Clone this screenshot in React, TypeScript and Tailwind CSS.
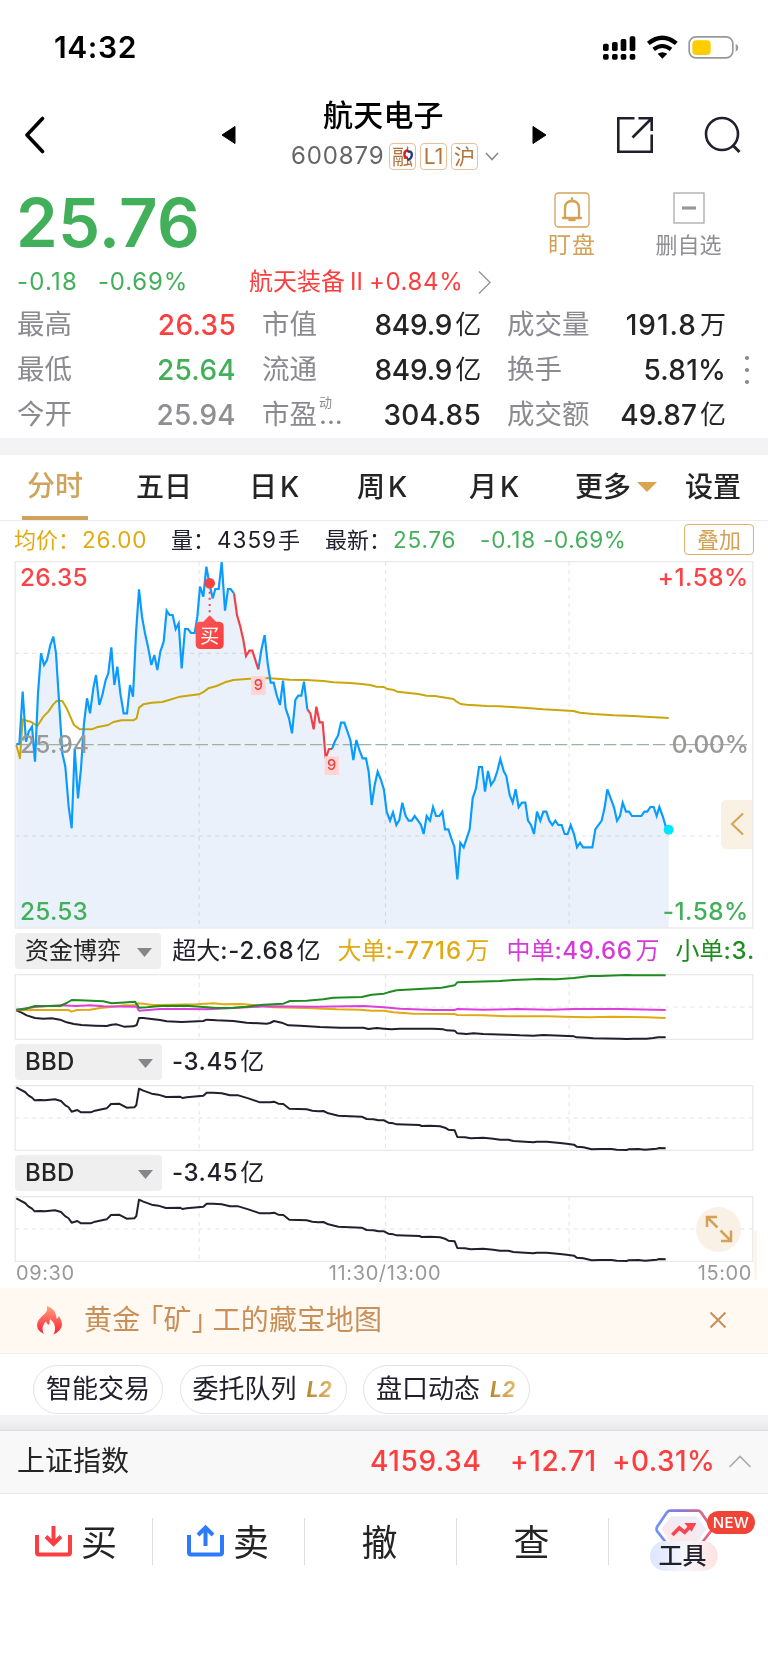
import type { ReactNode } from "react";

const PRICE_A =
  "49,912 58,912 68,755 78,905 86,875 96,860 105,965 114,760 123,640 132,675 141,660 151,615 160,590 168,640 173,720 180,830 187,940 196,980 206,1100 215,1165 224,925 234,1075 243,985 252,850 261,775 270,820 280,745 288,705 298,795 307,765 317,720 325,700 334,622 343,735 352,680 361,760 371,820 381,820 390,735 399,770 408,580 417,448 426,530 435,580 444,620 454,675 463,645 472,690 481,635 491,605 500,512 509,525 518,525 527,567 536,550 545,685 555,567 564,567 573,579 584,579 592,530 600,440 610,470 619,380 628,430 638,475 646,447 656,447 665,366 675,512 684,447 692,447 702,460";
const DROP_A = "702,460 711,525 721,560 730,600 738,648 748,632 757,632 775,688";
const PRICE_B =
  "775,688 784,630 794,585 803,670 812,728 821,728 830,765 840,795 849,722 857,805 867,835 876,880 886,780 895,767 904,767 912,725 922,808";
const DROP_B = "922,808 931,820 941,868 949,800 959,847 968,847 977,955 987,927 996,927";
const PRICE_C =
  "996,927 1005,903 1014,887 1023,848 1033,848 1051,900 1060,960 1069,900 1078,930 1088,955 1098,955 1106,995 1115,1095 1124,1035 1133,995 1143,1020 1152,1050 1160,1115 1170,1142 1179,1117 1189,1155 1198,1140 1207,1088 1217,1128 1226,1142 1235,1142 1244,1128 1254,1142 1263,1155 1271,1182 1280,1128 1290,1142 1299,1101 1308,1128 1318,1128 1327,1115 1335,1168 1345,1168 1354,1195 1363,1220 1372,1318 1381,1208 1391,1222 1400,1195 1409,1168 1418,1075 1428,1045 1437,981 1446,981 1455,1055 1464,993 1473,1035 1483,1020 1492,993 1501,957 1511,993 1519,1008 1529,1065 1538,1088 1547,1048 1556,1102 1566,1088 1576,1088 1584,1142 1593,1155 1602,1182 1611,1115 1621,1142 1630,1115 1639,1115 1648,1142 1657,1155 1666,1142 1675,1155 1685,1155 1694,1182 1703,1182 1712,1155 1722,1182 1731,1222 1740,1208 1749,1222 1777,1222 1786,1168 1805,1142 1814,1102 1822,1048 1832,1075 1842,1102 1851,1142 1860,1128 1868,1088 1878,1115 1887,1115 1896,1128 1924,1128 1933,1115 1942,1115 1951,1101 1961,1101 1970,1128 1978,1101 1988,1128 1998,1162 2006,1170";
const AVERAGE =
  "49,915 60,955 68,838 80,842 92,845 112,858 130,830 145,815 160,793 170,783 187,783 200,805 222,855 240,868 275,868 290,862 325,855 340,846 365,841 400,841 410,835 417,803 430,793 455,788 487,786 540,770 597,763 612,755 625,745 650,738 675,727 700,720 750,716 800,714 870,719 920,720 970,723 1000,727 1050,729 1085,732 1110,735 1130,740 1152,741 1162,747 1178,749 1192,755 1255,762 1280,767 1305,768 1360,777 1370,785 1382,792 1400,794 1460,798 1500,799 1580,804 1630,808 1720,813 1740,818 1780,822 1840,826 1900,828 1950,831 2006,834";
const BBD =
  "49,471 60,477 75,485 85,495 96,502 104,510 120,509 135,510 165,507 183,512 196,525 205,530 215,544 232,539 243,546 272,546 285,541 320,534 333,521 357,520 380,532 403,531 409,524 417,475 430,481 455,490 475,493 498,500 540,499 547,503 560,501 610,496 620,487 640,487 665,489 690,495 715,495 745,504 780,516 810,516 822,514 835,520 850,521 868,535 895,536 920,537 937,541 955,543 970,542 985,549 1015,556 1085,559 1100,566 1120,567 1135,570 1152,570 1165,577 1180,579 1190,582 1258,584 1265,587 1290,586 1320,588 1335,592 1345,598 1364,600 1372,620 1395,621 1412,624 1450,622 1480,625 1500,628 1525,628 1540,632 1575,634 1600,636 1610,634 1640,634 1680,638 1700,640 1722,643 1730,649 1750,651 1775,657 1800,656 1835,656 1850,658 1880,659 1885,657 1915,656 1935,658 1970,655 1978,653 1997,654";
const FLOW_SUPER =
  "49,240 65,247 80,255 105,263 130,265 155,264 180,268 200,276 222,281 245,284 285,286 320,287 335,283 350,282 372,289 400,288 410,284 417,263 430,263 480,269 500,273 545,275 610,272 620,268 650,270 700,272 740,277 800,280 810,278 822,272 845,277 865,285 900,286 960,290 1020,292 1090,292 1105,296 1130,293 1152,295 1175,297 1200,295 1300,295 1330,297 1340,300 1364,301 1372,309 1400,311 1420,309 1450,311 1520,313 1560,315 1600,316 1630,314 1722,318 1730,321 1760,322 1780,324 1860,325 1880,326 1900,325 1940,325 1960,323 1975,321 1997,321";
const FLOW_SMALL =
  "49,238 75,236 105,227 180,227 200,218 215,209 240,210 310,213 335,219 360,217 405,214 417,232 440,231 480,227 560,226 610,230 650,233 700,232 740,229 790,223 850,220 870,212 920,211 970,207 1000,202 1085,200 1115,193 1152,190 1165,186 1190,180 1325,172 1364,165 1372,156 1500,152 1540,149 1620,146 1670,147 1722,143 1770,137 1800,137 1880,134 1900,135 1997,135";
const FLOW_MID =
  "49,238 105,230 180,225 230,227 270,225 310,228 410,229 417,241 480,236 560,236 620,237 700,233 800,228 950,229 1090,227 1152,231 1200,235 1300,239 1364,239 1372,236 1450,238 1550,236 1650,238 1722,236 1860,236 1997,239";
const FLOW_BIG =
  "49,240 100,239 205,239 215,244 230,239 270,238 300,233 340,229 372,225 405,224 415,219 460,224 520,223 590,222 640,219 670,222 720,221 760,224 820,231 920,233 1010,237 1080,238 1115,241 1152,241 1180,246 1240,250 1364,251 1372,254 1450,255 1520,258 1640,258 1722,260 1770,261 1830,259 1940,261 1997,263";

function StatusBar() {
  return (
    <div className="flex h-[94px] shrink-0 items-center justify-between pr-[29px] pl-[54px]">
      <span className="text-[30px] font-semibold tracking-[0.6px] text-black">14:32</span>
      <svg width="136" height="26" viewBox="0 0 408 78" className="mt-[1px]">
        <g>
          {[
            [0, 22],
            [27, 17],
            [53, 8],
            [80, 0],
          ].map(([x, y]) => (
            <g key={x}>
              <rect x={x} y={y + 4} width="17" height={44 - y} rx="5" />
              <rect x={x} y="57" width="17" height="17" rx="5" />
            </g>
          ))}
        </g>
        <g fill="none" stroke="#000">
          <path d="M136 25 Q178 -9 220 25" strokeWidth="13" />
          <path d="M152 43 Q178 23 204 43" strokeWidth="12" />
        </g>
        <path d="M164 56 Q178 47 193 56 L178 71Z" />
        <rect x="258.500" y="5.500" width="131" height="63" rx="20" fill="none" stroke="#999" strokeWidth="5" />
        <rect x="268" y="16" width="55" height="44" rx="12" fill="#fc0" />
        <path d="M398 26 Q406 30 406 38 Q406 46 398 50Z" fill="#999" />
      </svg>
    </div>
  );
}

function Badge({ children }: { children: ReactNode }) {
  return (
    <span className="flex size-[27px] items-center justify-center rounded-[4px] border border-[#ebc09a] text-[21px] text-[#b0733c]">
      {children}
    </span>
  );
}

function Header() {
  return (
    <div className="mt-px flex h-20 shrink-0 items-center">
      <svg width="20" height="38" viewBox="0 0 20 38" className="ml-[25px]" fill="none" stroke="#000" strokeWidth="3.600">
        <path d="M17.500 2.500 L2 19 L17.500 35.500" strokeLinecap="round" strokeLinejoin="round" />
      </svg>
      <svg width="16" height="20" viewBox="0 0 16 20" className="ml-[176px]">
        <path d="M1 10 L14 1.500 V18.500Z" stroke="#000" strokeLinejoin="round" />
      </svg>
      <div className="ml-[53px] flex w-[230px] flex-col">
        <div className="flex h-10 items-center pl-[33px] text-[30px] font-medium tracking-[0.200px] text-black">航天电子</div>
        <div className="flex h-10 items-center pt-[2px]">
          <span className="w-[99px] pl-px text-[24px] tracking-[0.9px] text-[#666]">600879</span>
          <div className="flex gap-[4px]">
            <span className="relative flex">
              <Badge>融</Badge>
              <svg width="10" height="12" viewBox="0 0 10 12" className="absolute top-[6px] left-[14px]" fill="none" strokeWidth="2.400">
                <circle cx="5" cy="6" r="3.500" fill="#fff" />
                <path d="M5 1 Q1 2 1.500 6 Q2 9 5 9" stroke="#d8202c" />
                <path d="M4.500 2.500 Q9 2 8.800 6 Q8.500 10 4.500 11" stroke="#1f3a7a" />
              </svg>
            </span>
            <Badge>L1</Badge>
            <Badge>沪</Badge>
          </div>
          <svg width="14" height="9" viewBox="0 0 14 9" className="ml-[7px]" fill="none" stroke="#8a8a8a" strokeWidth="1.600">
            <path d="M1 1 L7 7.500 L13 1" />
          </svg>
        </div>
      </div>
      <svg width="16" height="20" viewBox="0 0 16 20" className="ml-[11px]">
        <path d="M15 10 L2 1.500 V18.500Z" stroke="#000" strokeLinejoin="round" />
      </svg>
      <svg width="38" height="38" viewBox="0 0 38 38" className="ml-[69px]" fill="none" stroke="#20202c" strokeWidth="2.600">
        <path d="M18.500 2.300 H2.300 V35.700 H35.700 V18.500" />
        <path d="M22.500 2.300 H35.700 V15 M35 3 L16.500 21.500" />
      </svg>
      <svg width="38" height="38" viewBox="0 0 38 38" className="ml-[50px]" fill="none" stroke="#20202c" strokeWidth="2.600">
        <circle cx="18" cy="18" r="16" />
        <path d="M28.500 29 L35.500 36" strokeWidth="3" />
      </svg>
    </div>
  );
}

function Quote() {
  return (
    <>
      <div className="flex h-[95px] shrink-0">
        <span className="flex w-[531px] items-center pl-[16px] text-[67px] font-semibold tracking-[0.3px] text-[#42b05a]">
          25.76
        </span>
        <div className="flex w-[82px] flex-col items-center pt-[17px] text-[#d3a257]">
          <svg width="36" height="36" viewBox="0 0 36 36" fill="none" stroke="currentColor">
            <rect x="1" y="1" width="34" height="34" rx="3.500" strokeWidth="1.300" />
            <path d="M9 26 H27 M11 26 V16.500 Q11 9 18 9 Q25 9 25 16.500 V26" strokeWidth="2.300" strokeLinecap="round" />
            <path d="M18 6.500 V9 M15.500 28 H20.500" strokeWidth="2.500" strokeLinecap="round" />
          </svg>
          <span className="mt-[5px] h-6 text-[23px] leading-6 tracking-[1px]">盯盘</span>
        </div>
        <div className="flex w-[151px] flex-col items-center pt-[17px] text-[#8e8e93]">
          <svg width="32" height="36" viewBox="0 0 32 36" fill="none">
            <rect x="1" y="1" width="30" height="30" stroke="#aaa" strokeWidth="1.300" />
            <path d="M9 16 H23" stroke="#999" strokeWidth="3.200" />
          </svg>
          <span className="mt-[5px] h-6 text-[22px] leading-6">删自选</span>
        </div>
      </div>
      <div className="mt-px flex h-[22px] shrink-0 items-center text-[24px] text-[#42b05a]">
        <span className="w-[81px] pl-[17px] tracking-[1.200px]">-0.18</span>
        <span className="w-[168px] pl-[17px] tracking-[0.8px]">-0.69%</span>
        <span className="flex w-[227px] items-center whitespace-nowrap text-[#fc3e3e]">
          <span className="w-[101px]">航天装备</span>
          <span className="w-[19px]">Ⅱ</span>
          <span className="tracking-[0.6px]">+0.84%</span>
        </span>
        <svg width="16" height="24" viewBox="0 0 16 24" fill="none" stroke="#999" strokeWidth="1.500">
          <path d="M3 1.500 L14 12.500 L3 23.500" />
        </svg>
      </div>
    </>
  );
}

const STATS = [
  ["最高", "26.35", "text-[#fc3e3e]", "市值", "849.9", "亿", "成交量", "191.8", "万", "tracking-[1px]"],
  ["最低", "25.64", "text-[#42b05a]", "流通", "849.9", "亿", "换手", "5.81%", "", "tracking-[0.2px]"],
  ["今开", "25.94", "text-[#8e8e93]", "市盈", "304.85", "", "成交额", "49.87", "亿", "tracking-[0px]"],
];

function Stats() {
  return (
    <div className="flex shrink-0 items-center pt-[10px]">
      <div className="flex w-[726px] flex-col pb-px text-[28px] text-[#242424]">
        {STATS.map((s) => (
          <div key={s[0]} className="flex h-[44.667px] items-center">
            <div className="flex w-[236px] justify-between pl-[17px]">
              <span className="text-[27.500px] text-[#8a8a90]">{s[0]}</span>
              <span className={"font-medium tracking-[0.3px] " + s[2]}>{s[1]}</span>
            </div>
            <div className="flex w-[245px] justify-between pl-[26px]">
              <span className="flex text-[27.500px] text-[#8a8a90]">
                {s[3]}
                {s[3] === "市盈" && (
                  <span className="mt-[-5px] flex flex-col pl-[2px]">
                    <span className="text-[13px]">动</span>
                    <span className="leading-[10px]">...</span>
                  </span>
                )}
              </span>
              <span className={"flex items-center gap-[3px] font-medium " + (s[5] ? "tracking-[-0.200px]" : "tracking-[0.300px]")}>
                {s[4]}
                {s[5] && <span className="text-[26px] font-normal">{s[5]}</span>}
              </span>
            </div>
            <div className="flex w-[245px] justify-between pl-[26px]">
              <span className="text-[27.500px] text-[#8a8a90]">{s[6]}</span>
              <span className={"flex items-center gap-[3px] font-medium " + s[9]}>
                {s[7]}
                {s[8] && <span className="text-[26px] font-normal tracking-normal">{s[8]}</span>}
              </span>
            </div>
          </div>
        ))}
      </div>
      <div className="flex flex-col gap-[8px] pb-px pl-[19px]">
        <i className="size-[4px] rounded-full bg-[#85858c]" />
        <i className="size-[4px] rounded-full bg-[#85858c]" />
        <i className="size-[4px] rounded-full bg-[#85858c]" />
      </div>
    </div>
  );
}

function Tabs() {
  return (
    <div className="flex h-[66px] shrink-0 border-b border-[#ededed] pb-px text-[28px] font-medium text-[#242424]">
      <span className="mb-[-1px] ml-[22px] flex w-[66px] items-center justify-center border-b-4 border-[#cfa35c] pt-[2px] text-[#cfa35c]">
        分时
      </span>
      <span className="ml-[48px] flex w-[113px] items-center">五日</span>
      <span className="flex w-[108px] items-center gap-[3px]">
        日<span>K</span>
      </span>
      <span className="flex w-[112px] items-center gap-[3px]">
        周<span>K</span>
      </span>
      <span className="flex w-[106px] items-center gap-[3px]">
        月<span>K</span>
      </span>
      <span className="flex w-[110px] items-center gap-[6px]">
        更多
        <svg width="20" height="10" viewBox="0 0 20 10">
          <path d="M0 0 H20 L10 10Z" fill="#dba550" />
        </svg>
      </span>
      <span className="flex items-center">设置</span>
    </div>
  );
}

function Legend() {
  return (
    <div className="flex h-10 shrink-0 items-center pb-[2px] text-[22.500px] whitespace-nowrap text-[#20202c]">
      <span className="w-[67px] pl-[14px] text-[22px] text-[#e0aa10]">均价：</span>
      <span className="w-[90px] pl-[15px] tracking-[0.8px] text-[#e0aa10]">26.00</span>
      <span className="w-[60px] pl-[14px] text-[22px]">量：</span>
      <span className="w-[61px] tracking-[1px]">4359</span>
      <span className="w-[47px] text-[22px]">手</span>
      <span className="w-[68px] text-[22px]">最新：</span>
      <span className="w-[87px] tracking-[0.8px] text-[#42b05a]">25.76</span>
      <span className="w-[63px] tracking-[0.9px] text-[#42b05a]">-0.18</span>
      <span className="w-[141px] tracking-[0.6px] text-[#42b05a]">-0.69%</span>
      <span className="flex h-[31px] w-[70px] items-center justify-center rounded-[4px] border border-[#d9b06c] text-[22px] text-[#d3a257]">
        叠加
      </span>
    </div>
  );
}

function Grid({ top, bottom, mid }: { top: number; bottom: number; mid: number[] }) {
  return (
    <g fill="none" stroke="#e6e6e8" strokeWidth="3.500">
      <rect x="45.500" y={top} width="2213" height={bottom - top} />
      <g strokeDasharray="12 13">
        {[597.5, 1156.5, 1707.5].map((x) => (
          <path key={x} d={`M${x} ${top} V${bottom}`} />
        ))}
        {mid.map((y) => (
          <path key={y} d={`M46 ${y} H2257`} />
        ))}
      </g>
    </g>
  );
}

function PriceChart() {
  return (
    <div className="relative h-[368px] shrink-0">
      <svg width="768" height="368" viewBox="0 363 2304 1104" fill="none">
        <defs>
          <linearGradient id="buy" x1="0" y1="0" x2="1" y2="1">
            <stop offset="0" stopColor="#ff5a5a" />
            <stop offset="1" stopColor="#f63c3c" />
          </linearGradient>
        </defs>
        <polygon points={`49,1462 ${PRICE_A} ${DROP_A} ${PRICE_B} ${DROP_B} ${PRICE_C} 2006,1462`} fill="#eaf1fa" />
        <g style={{ mixBlendMode: "multiply" }}>
          <Grid top={365} bottom={1464} mid={[640, 1188]} />
        </g>
        <path d="M48 914 H2245" stroke="#9db39d" strokeWidth="4" strokeDasharray="37 12" />
        <polyline points={AVERAGE} stroke="#c9a60c" strokeWidth="6" strokeLinejoin="round" />
        <g stroke="#0a9bff" strokeWidth="6.500">
          <polyline points={PRICE_A} />
          <polyline points={PRICE_B} />
          <polyline points={PRICE_C} />
        </g>
        <g stroke="#f04048" strokeWidth="6.500">
          <polyline points={DROP_A} />
          <polyline points={DROP_B} />
        </g>
        <circle cx="2006" cy="1169" r="15" fill="#00e5ff" />
        <g fill="#ffd6d6">
          <rect x="753" y="708" width="44" height="57" />
          <rect x="974" y="949" width="43" height="56" />
        </g>
        <g fill="#f53d3d" fontSize="44" fontWeight="500" textAnchor="middle">
          <text x="775" y="750">9</text>
          <text x="995" y="990">9</text>
        </g>
        <circle cx="629" cy="430" r="16" fill="#fb4040" />
        <path d="M629 455 V524" stroke="#fb4040" strokeWidth="6" strokeDasharray="6 12.500" />
        <path
          d="M602 545 H610 L629 526 L648 545 H656 Q671 545 671 560 V612 Q671 627 656 627 H602 Q587 627 587 612 V560 Q587 545 602 545Z"
          fill="url(#buy)"
        />
        <text x="629" y="608" fontSize="58" fill="#fff" textAnchor="middle">买</text>
        <g fontSize="73" fontWeight="500" letterSpacing="0.800">
          <text x="60" y="438" fill="#fb4246">26.35</text>
          <text x="60" y="939" fill="#999">25.94</text>
          <text x="60" y="1440" fill="#42b05a">25.53</text>
          <g textAnchor="end">
            <text x="2246" y="438" fill="#fb4246" letterSpacing="1.500">+1.58%</text>
            <text x="2247" y="939" fill="#999" letterSpacing="0">0.00%</text>
            <text x="2246" y="1440" fill="#42b05a" letterSpacing="1.500">-1.58%</text>
          </g>
        </g>
      </svg>
      <div className="absolute top-[239px] right-[16px] flex h-[49px] w-[31px] items-center justify-center rounded-l-[5px] bg-[#faf1e5]">
        <svg width="14" height="24" viewBox="0 0 14 24" fill="none" stroke="#d3a257" strokeWidth="2">
          <path d="M13 1.500 L2 12 L13 22.500" />
        </svg>
      </div>
    </div>
  );
}

function Picker({ children }: { children: ReactNode }) {
  return (
    <div className="ml-[15px] flex h-9 w-[147px] items-center justify-between rounded-[4px] bg-[#efefef] pr-[9px] pl-[10px] text-[24px] text-[#242424]">
      <span>{children}</span>
      <svg width="15" height="9" viewBox="0 0 15 9" className="mt-[3px]">
        <path d="M0 0 H15 L7.500 9Z" fill="#85858a" />
      </svg>
    </div>
  );
}

function BbdRow() {
  return (
    <div className="flex h-[45px] shrink-0 items-start pt-[4px] text-[#20202c]">
      <Picker>
        <span className="font-[450] tracking-[0.3px]">BBD</span>
      </Picker>
      <span className="ml-[10px] flex h-9 items-center gap-[2px] text-[24px] font-[450] tracking-[0.6px]">
        -3.45<span className="text-[24px] font-normal">亿</span>
      </span>
    </div>
  );
}

function BbdChart() {
  return (
    <svg width="768" height="66" viewBox="0 464 2304 198" className="shrink-0" fill="none">
      <Grid top={466} bottom={660} mid={[563]} />
      <polyline points={BBD} stroke="#20202c" strokeWidth="6" strokeLinejoin="round" />
    </svg>
  );
}

function SubCharts() {
  return (
    <>
      <div className="flex h-[45px] shrink-0 items-start overflow-hidden pt-[4px] pr-[13px] text-[24px] whitespace-nowrap text-[#20202c]">
        <Picker>资金博弈</Picker>
        <span className="ml-[11px] flex h-9 w-[166px] items-center">
          <span>超大</span>
          <span className="font-[450] tracking-[0.8px]">:-2.68</span>
          <span className="pl-[2px]">亿</span>
        </span>
        <span className="flex h-9 w-[170px] items-center text-[#e0aa10]">
          <span>大单</span>
          <span className="font-[450] tracking-[1px]">:-7716</span>
          <span className="pl-[3px]">万</span>
        </span>
        <span className="flex h-9 w-[170px] items-center text-[#d63ad6]">
          <span>中单</span>
          <span className="font-[450] tracking-[0.6px]">:49.66</span>
          <span className="pl-[3px]">万</span>
        </span>
        <span className="flex h-9 items-center text-[#1e8c1e]">
          <span>小单</span>
          <span className="font-[450] tracking-[0.8px]">:3.</span>
        </span>
      </div>
      <svg width="768" height="66" viewBox="0 131 2304 198" className="shrink-0" fill="none">
        <Grid top={133} bottom={327} mid={[230]} />
        <g strokeWidth="6" strokeLinejoin="round">
          <polyline points={FLOW_SUPER} stroke="#20202c" />
          <polyline points={FLOW_BIG} stroke="#e0aa10" />
          <polyline points={FLOW_MID} stroke="#dc40dc" />
          <polyline points={FLOW_SMALL} stroke="#1e8c1e" />
        </g>
      </svg>
      <BbdRow />
      <BbdChart />
      <BbdRow />
      <div className="relative flex shrink-0 flex-col">
        <BbdChart />
        <div className="flex h-[26px] items-center justify-between pr-[16px] pb-[3px] pl-[16px] text-[20px] tracking-[0.6px] text-[#999]">
          <span className="w-[82px]">09:30</span>
          <span>11:30/13:00</span>
          <span className="w-[80px] text-right">15:00</span>
        </div>
        <div className="absolute top-[11px] left-[696px] flex size-[45px] items-center justify-center rounded-full bg-[#f9f1e5]">
          <svg width="28" height="28" viewBox="0 0 28 28" fill="none" stroke="#d3a257" strokeWidth="2.500">
            <path d="M12 2 H2 V12 M2 2 L12.500 12.500" />
            <path d="M26 15.500 V26 H16 M26 26 L15.500 15.500" />
          </svg>
        </div>
        <div className="absolute top-[35px] right-[11px] h-[49px] w-[3px] rounded-r-[2px] bg-[#fcf4ea]" />
      </div>
    </>
  );
}

function Banner() {
  return (
    <div className="flex h-[65px] shrink-0 items-center bg-[#fff9f2] text-[#c98f58]">
      <svg width="26" height="30" viewBox="0 0 26 30" className="ml-[36px]">
        <defs>
          <linearGradient id="fire" x1="0" y1="0" x2="0" y2="1">
            <stop offset="0" stopColor="#ffa07a" />
            <stop offset="1" stopColor="#fb1f38" />
          </linearGradient>
        </defs>
        <path
          d="M11 1 Q12 6 8 9.500 Q1 15 1 20 Q1 26 8 29 Q5 24 8 19 Q9 17 10 16.500 Q11 19 12.500 20 Q14 18 14 14 Q20 19 19 25 Q18.500 28 17 29.500 Q26 26 26 19 Q25 14 23 11 Q22 14 20.500 13.500 Q20 4 11 1Z"
          fill="url(#fire)"
        />
      </svg>
      <span className="ml-[22px] flex w-[625px] text-[28px] whitespace-nowrap">
        <span className="tracking-[0.200px]">黄金</span>
        <span className="ml-[9px] [font-feature-settings:'halt']">「</span>
        <span>矿</span>
        <span className="mr-[7px] [font-feature-settings:'halt']">」</span>
        <span className="tracking-[0.300px]">工的藏宝地图</span>
      </span>
      <svg width="18" height="18" viewBox="0 0 18 18" fill="none" stroke="currentColor" strokeWidth="2">
        <path d="M1.500 1.500 L16.500 16.500 M16.500 1.500 L1.500 16.500" />
      </svg>
    </div>
  );
}

function Pill({ children, tag }: { children: ReactNode; tag?: boolean }) {
  return (
    <span className="flex h-[49px] items-center rounded-full border border-[#e2e2e4] px-[12px] text-[26px] text-[#20202c]">
      <span>{children}</span>
      {tag && (
        <span className="ml-[10px] w-[27px] bg-gradient-to-r from-[#b8862c] to-[#e6be78] bg-clip-text text-[21px] font-bold text-transparent italic">
          L2
        </span>
      )}
    </span>
  );
}

function Shortcuts() {
  return (
    <div className="flex h-[62px] shrink-0 items-start gap-[16.500px] border-t border-[#f1f1f3] pt-[11px] pl-[33px]">
      <Pill>智能交易</Pill>
      <Pill tag>委托队列</Pill>
      <Pill tag>盘口动态</Pill>
    </div>
  );
}

function IndexBar() {
  return (
    <>
      <div className="h-[15px] shrink-0 bg-gradient-to-b from-[#f3f3f6] from-30% to-[#e8e8ea]" />
      <div className="flex h-16 shrink-0 items-center border-t border-b border-t-[#dedede] border-b-[#e8e8e8] bg-[#f8f8f8] pb-px text-[28px] text-[#fc3e3e]">
        <span className="w-[370px] pl-[17px] text-[#242424]">上证指数</span>
        <span className="w-[140px] font-medium tracking-[0.6px]">4159.34</span>
        <span className="w-[102px] font-medium tracking-[0.6px]">+12.71</span>
        <span className="w-[116px] font-medium tracking-[0.4px]">+0.31%</span>
        <svg width="24" height="13" viewBox="0 0 24 13" fill="none" stroke="#aaa" strokeWidth="1.600">
          <path d="M1.500 12 L12 1.500 L22.500 12" />
        </svg>
      </div>
    </>
  );
}

function Separator() {
  return <i className="h-[47px] w-px shrink-0 bg-[#dedee0]" />;
}

function BottomBar() {
  return (
    <div className="flex h-[95px] shrink-0 items-center text-[36px] text-[#242424]">
      <div className="flex w-[152px] items-center gap-[8px] pl-[35px]">
        <svg width="38" height="32" viewBox="0 0 38 32" fill="none" stroke="#fb3e42" strokeWidth="4">
          <path d="M2 10 V27.500 Q2 29.500 4 29.500 H33 Q35 29.500 35 27.500 V10" />
          <path d="M18.500 1 V18 M11 11.500 L18.500 19 L26 11.500" />
        </svg>
        <span className="pt-[3px]">买</span>
      </div>
      <Separator />
      <div className="flex w-[151px] items-center gap-[8px] pl-[34px]">
        <svg width="38" height="34" viewBox="0 0 38 34" fill="none" stroke="#2c7bff" strokeWidth="4">
          <path d="M2 11 V28.500 Q2 30.500 4 30.500 H33 Q35 30.500 35 28.500 V11" />
          <path d="M18.500 22 V4 M11 11 L18.500 3.500 L26 11" />
        </svg>
        <span className="pt-[3px]">卖</span>
      </div>
      <Separator />
      <div className="flex w-[151px] justify-center pt-[3px] pr-[2px]">撤</div>
      <Separator />
      <div className="flex w-[151px] justify-center pt-[3px] pr-[2px]">查</div>
      <Separator />
      <div className="relative flex h-[62px] w-[159px] flex-col items-start pl-[41px]">
        <svg width="58" height="34" viewBox="0 0 174 102" fill="none" className="mt-[-1px] ml-[5px]">
          <defs>
            <linearGradient id="hex" x1="0" y1="0" x2="1" y2="0">
              <stop offset="0" stopColor="#6a94ff" />
              <stop offset="0.400" stopColor="#8a76dc" />
              <stop offset="1" stopColor="#f0606c" />
            </linearGradient>
            <linearGradient id="core" x1="0" y1="1" x2="1" y2="0">
              <stop offset="0" stopColor="#ffe6e4" />
              <stop offset="1" stopColor="#e9efff" />
            </linearGradient>
          </defs>
          <path d="M34 102 L6 66 Q3 60 6 54 L36 10 Q40 5 46 5 H128 Q134 5 138 10 L168 54 Q171 60 168 66 L140 102" stroke="url(#hex)" strokeWidth="8" />
          <path d="M44 96 L20 60 L48 22 H126 L154 60 L130 96Z" fill="url(#core)" />
          <path d="M52 78 L73 57 L89 70 L111 47" stroke="#fb4450" strokeWidth="11" />
          <path d="M88 42 H124 L110 68Z" fill="#fb4450" />
        </svg>
        <span className="mt-[-2px] flex h-[30px] w-[68px] items-center justify-center rounded-full bg-gradient-to-r from-[#dde6ff] via-[#f6f6fa] to-[#ffe2e0] pr-[3px] pb-px text-[24px] font-medium text-[#20202c]">
          工具
        </span>
        <span className="absolute top-[1px] left-[98px] flex h-[23px] w-[48px] items-center justify-center rounded-full bg-[#f04438] text-[15px] font-medium tracking-[0.300px] text-white">
          NEW
        </span>
      </div>
    </div>
  );
}

export default function App() {
  return (
    <div className="flex h-[1663px] w-[768px] flex-col overflow-hidden bg-white font-[family-name:Inter,'Noto_Sans_CJK_SC',sans-serif] leading-none">
      <StatusBar />
      <Header />
      <Quote />
      <Stats />
      <div className="h-[17px] shrink-0 bg-[#f3f3f6]" />
      <Tabs />
      <Legend />
      <PriceChart />
      <SubCharts />
      <Banner />
      <Shortcuts />
      <IndexBar />
      <BottomBar />
    </div>
  );
}
